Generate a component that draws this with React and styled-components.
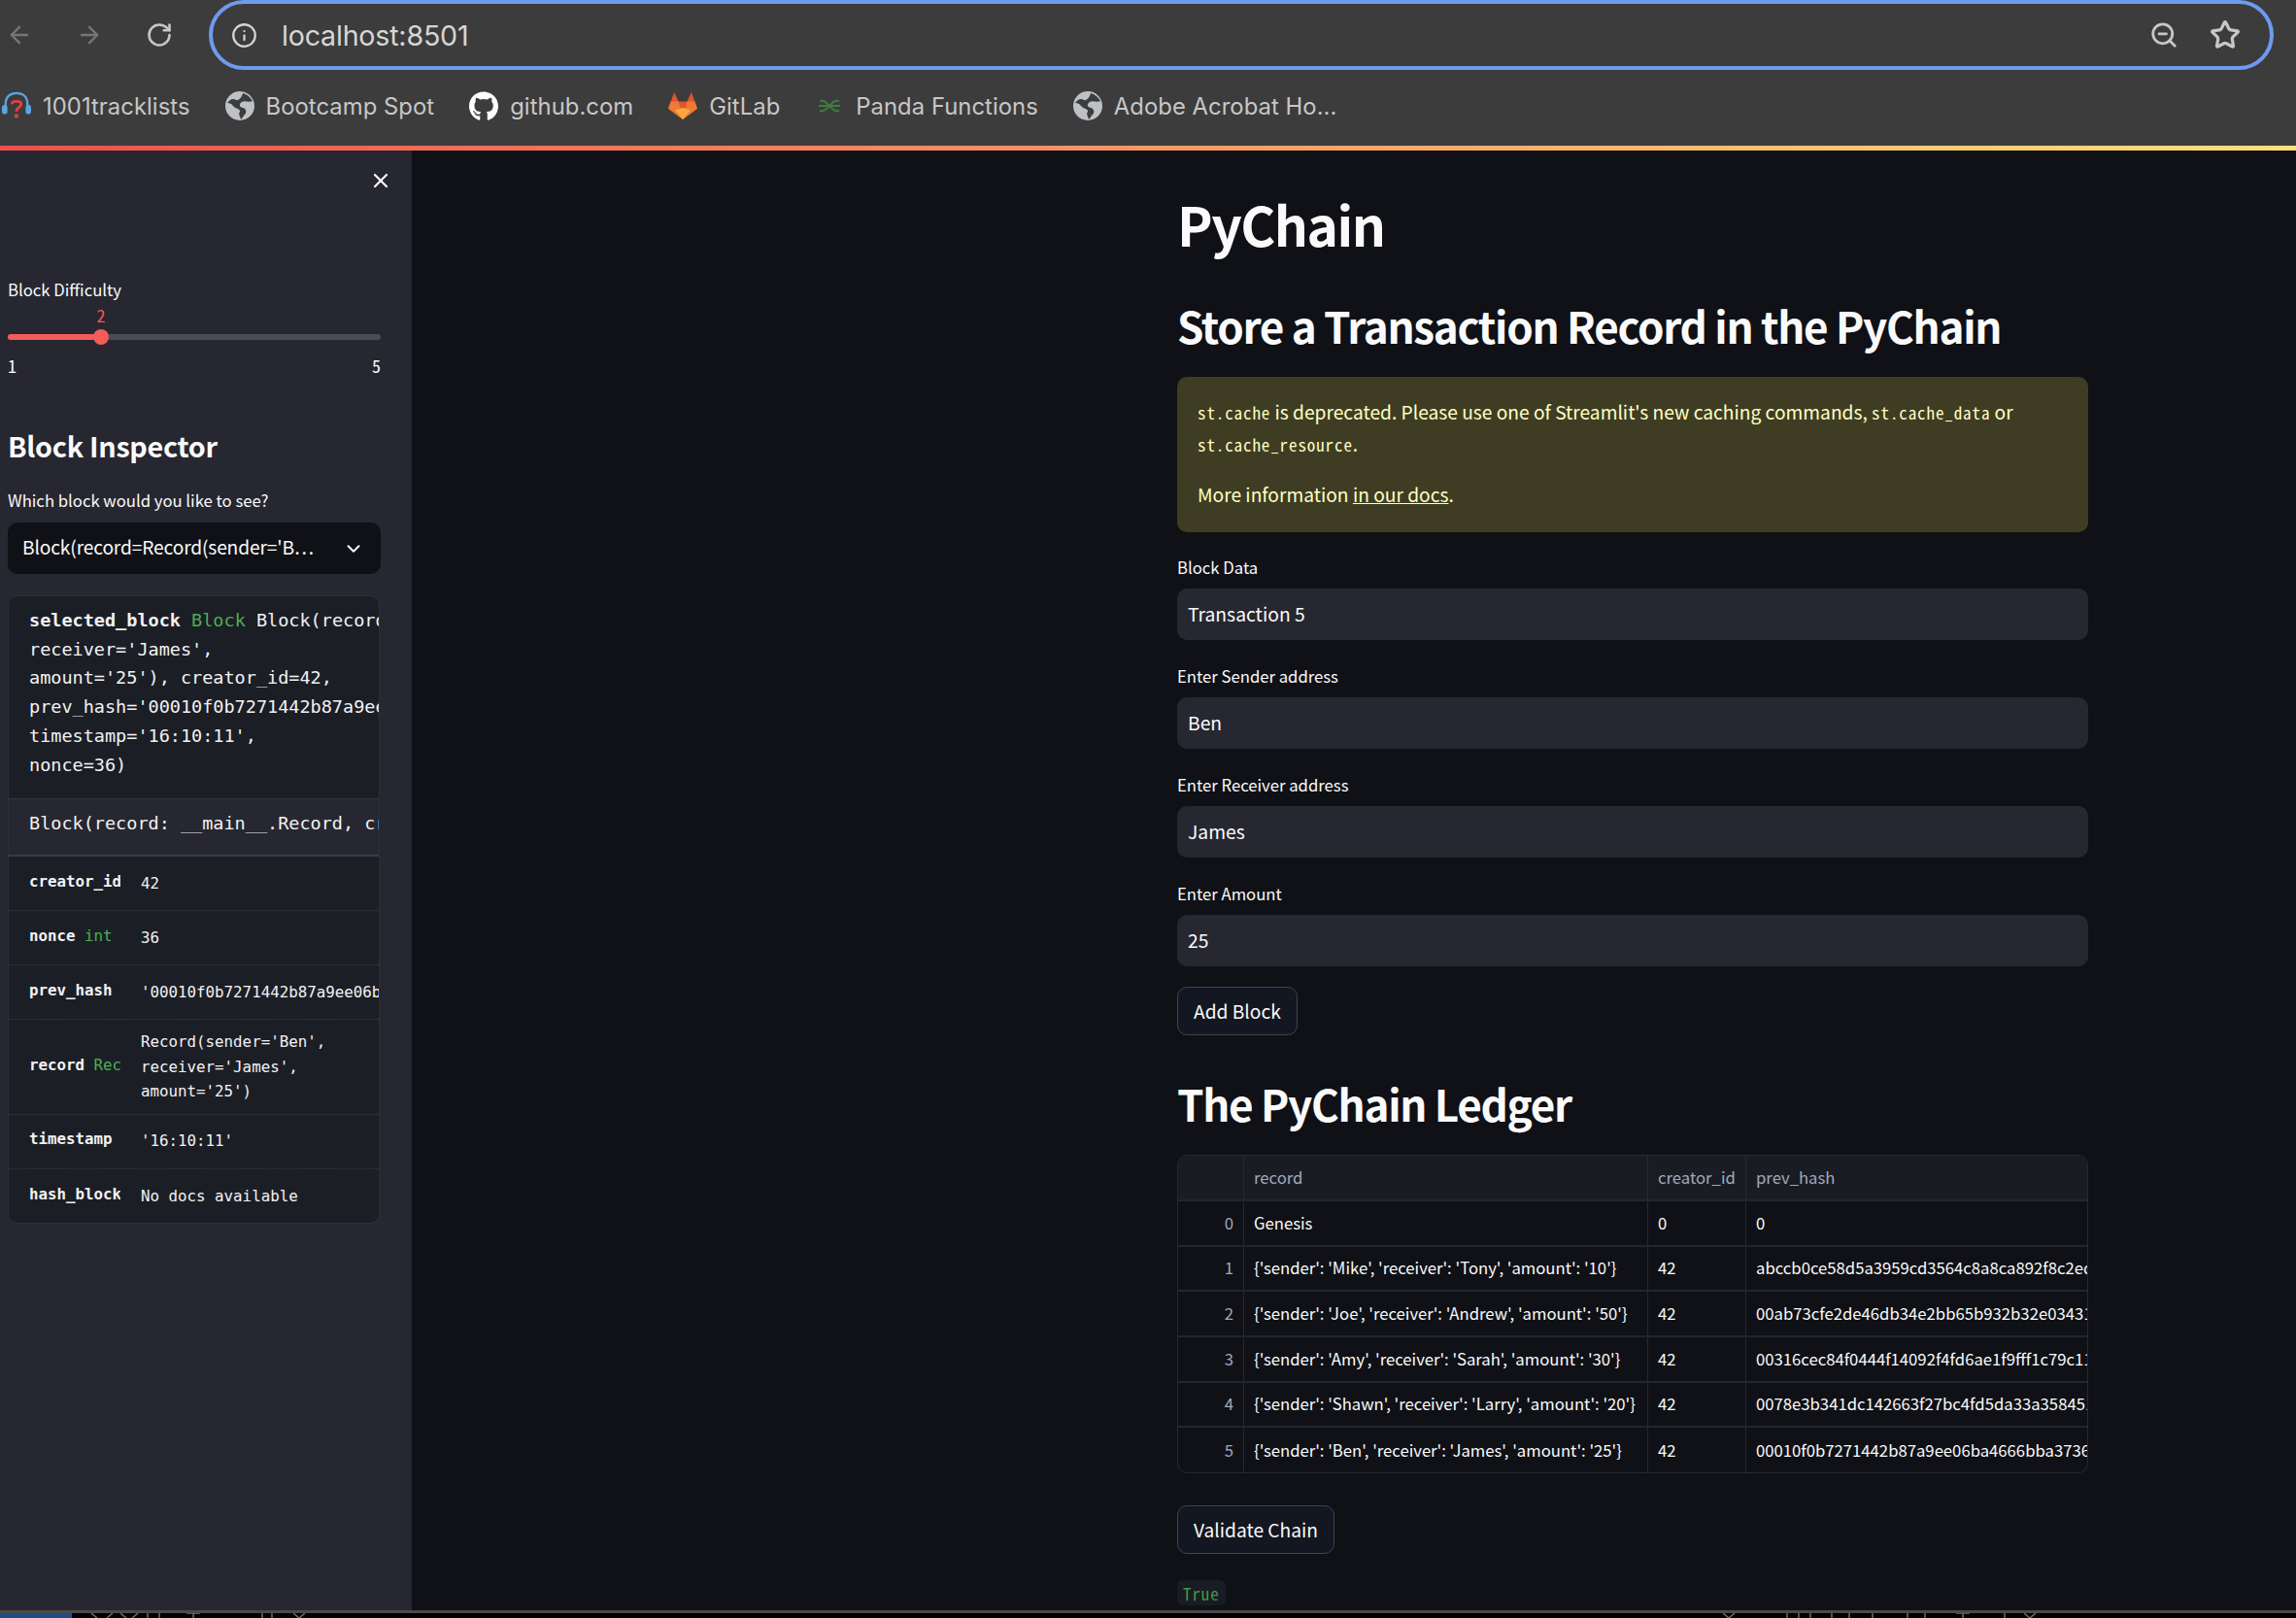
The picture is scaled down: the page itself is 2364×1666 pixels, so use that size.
import React from 'react'
import styled, { createGlobalStyle } from 'styled-components'
import { ArrowLeft, ArrowRight, RotateCw, Info, ZoomOut, Star, X, ChevronDown } from 'lucide-react'
import { FaGithub } from 'react-icons/fa'

const SANS = '"Noto Sans CJK SC", "Noto Sans", sans-serif'
const MONO = '"DejaVu Sans Mono", monospace'
const CODE = '"Noto Sans Mono CJK SC", "Liberation Mono", monospace'

const GlobalStyle = createGlobalStyle`
  html, body {
    margin: 0;
    padding: 0;
    background: #0f1116;
    overflow: hidden;
  }
  * { box-sizing: border-box; }
`

const Headphones = () => (
  <svg width="32" height="32" viewBox="0 0 32 32">
    <path d="M4 20 V14 C4 6 9 2 16 2 C23 2 28 6 28 14 V20" fill="none" stroke="#5aa5e0" strokeWidth="2.4" />
    <rect x="0" y="15" width="6" height="10" rx="3" fill="#5aa5e0" />
    <rect x="26" y="15" width="6" height="10" rx="3" fill="#5aa5e0" />
    <path d="M11 14 C11 10 21 10 21 14 C21 18 16 17 16 22" fill="none" stroke="#e2413f" strokeWidth="3" />
    <rect x="14" y="25" width="4" height="4" fill="#e2413f" />
  </svg>
)

const Globe = () => (
  <svg width="30" height="30" viewBox="0 0 30 30">
    <circle cx="15" cy="15" r="15" fill="#bdc1c6" />
    <path d="M18 2 C22 3 26 6 28 10 C24 12 20 9 17 11 C14 13 14 16 18 17 C22 18 22 22 20 24 C18 26 18 27 16 29 C15 25 13 23 15 21 C16 18 10 18 8 15 C6 12 3 12 2 12 C5 8 8 7 11 9 C14 10 17 6 18 2 Z" fill="#3c3c3c" />
  </svg>
)

const GitLab = () => (
  <svg width="34" height="32" viewBox="0 0 34 32">
    <polygon points="7,0 12,11 22,11 27,0 34,19 17,32 0,19" fill="#e0552f" />
    <polygon points="0,19 3,11 12,11 17,32" fill="#ee7a35" />
    <polygon points="34,19 31,11 22,11 17,32" fill="#ee7a35" />
    <polygon points="8,21 17,18 26,21 17,32" fill="#fba63c" />
  </svg>
)

const PandaMark = () => (
  <svg width="24" height="14" viewBox="0 0 24 14" fill="none" stroke="#3e7d3c" strokeWidth="2">
    <path d="M2 2 C7 1 9 4 12 7 C15 10 17 13 22 12" />
    <path d="M22 2 C17 1 15 4 12 7 C9 10 7 13 2 12" />
    <path d="M1 7 H23" />
  </svg>
)

const bookmarks = [
  { icon: <Headphones />, label: '1001tracklists' },
  { icon: <Globe />, label: 'Bootcamp Spot' },
  { icon: <FaGithub size={35} color="#fff" />, label: 'github.com' },
  { icon: <GitLab />, label: 'GitLab' },
  { icon: <PandaMark />, label: 'Panda Functions' },
  { icon: <Globe />, label: 'Adobe Acrobat Ho...' },
]

const inspectRows = [
  { key: 'creator_id', value: ['42'] },
  { key: 'nonce', type: 'int', value: ['36'] },
  { key: 'prev_hash', value: ["'00010f0b7271442b87a9ee06ba4666bba3736'"] },
  { key: 'record', type: 'Record', value: ["Record(sender='Ben',", "receiver='James',", "amount='25')"] },
  { key: 'timestamp', value: ["'16:10:11'"] },
  { key: 'hash_block', value: ['No docs available'] },
]

const fields = [
  { label: 'Block Data', value: 'Transaction 5' },
  { label: 'Enter Sender address', value: 'Ben' },
  { label: 'Enter Receiver address', value: 'James' },
  { label: 'Enter Amount', value: '25' },
]

const ledger = [
  ['Genesis', '0', '0'],
  ["{'sender': 'Mike', 'receiver': 'Tony', 'amount': '10'}", '42', 'abccb0ce58d5a3959cd3564c8a8ca892f8c2edf1a90b'],
  ["{'sender': 'Joe', 'receiver': 'Andrew', 'amount': '50'}", '42', '00ab73cfe2de46db34e2bb65b932b32e03431a90b7c2'],
  ["{'sender': 'Amy', 'receiver': 'Sarah', 'amount': '30'}", '42', '00316cec84f0444f14092f4fd6ae1f9fff1c79c11a90'],
  ["{'sender': 'Shawn', 'receiver': 'Larry', 'amount': '20'}", '42', '0078e3b341dc142663f27bc4fd5da33a358451a90b7c'],
  ["{'sender': 'Ben', 'receiver': 'James', 'amount': '25'}", '42', '00010f0b7271442b87a9ee06ba4666bba3736a90b7c2'],
]

const App = () => {
  return (
    <Page>
      <GlobalStyle />
      <Toolbar>
        <NavRow>
          <NavButton $dim><ArrowLeft size={30} strokeWidth={2} /></NavButton>
          <NavButton $dim><ArrowRight size={30} strokeWidth={2} /></NavButton>
          <NavButton><RotateCw size={28} strokeWidth={2.2} /></NavButton>
          <UrlBar>
            <Info size={27} strokeWidth={2} color="#d6d6d6" />
            <UrlText>localhost:8501</UrlText>
            <UrlActions>
              <ZoomOut size={30} strokeWidth={2.2} color="#c7c7c7" />
              <Star size={32} strokeWidth={2.4} color="#c7c7c7" />
            </UrlActions>
          </UrlBar>
        </NavRow>
        <BookmarkRow>
          {bookmarks.map((b) => (
            <Bookmark key={b.label}>
              <BookmarkIcon>{b.icon}</BookmarkIcon>
              {b.label}
            </Bookmark>
          ))}
        </BookmarkRow>
      </Toolbar>
      <Decoration />

      <Body>
        <Sidebar>
          <CloseButton><X size={24} strokeWidth={2.2} color="#fafafa" /></CloseButton>

          <SliderLabel>Block Difficulty</SliderLabel>
          <Slider>
            <SliderValue>2</SliderValue>
            <SliderTrack>
              <SliderFill />
              <SliderThumb />
            </SliderTrack>
          </Slider>
          <SliderTicks>
            <span>1</span>
            <span>5</span>
          </SliderTicks>

          <SideHeading>Block Inspector</SideHeading>
          <SelectLabel>Which block would you like to see?</SelectLabel>
          <Select>
            <SelectText>Block(record=Record(sender='B…</SelectText>
            <ChevronDown size={22} strokeWidth={2.2} color="#fafafa" />
          </Select>

          <InspectCard>
            <InspectHead>
              <div><b>selected_block</b> <TypeName>Block</TypeName> Block(record=Record(sender='Ben',</div>
              <div>receiver='James',</div>
              <div>amount='25'), creator_id=42,</div>
              <div>prev_hash='00010f0b7271442b87a9ee06ba4666bba3736',</div>
              <div>timestamp='16:10:11',</div>
              <div>nonce=36)</div>
            </InspectHead>
            <InspectDoc>Block(record: __main__.Record, creator_id: int)</InspectDoc>
            {inspectRows.map((row) => (
              <InspectRow key={row.key}>
                <InspectKey>
                  <b>{row.key}</b>{row.type && <TypeName> {row.type}</TypeName>}
                </InspectKey>
                <InspectValue>
                  {row.value.map((line) => <div key={line}>{line}</div>)}
                </InspectValue>
              </InspectRow>
            ))}
          </InspectCard>
        </Sidebar>

        <Main>
          <Title>PyChain</Title>
          <Heading $top={39}>Store a Transaction Record in the PyChain</Heading>

          <Warning>
            <p><code>st.cache</code> is deprecated. Please use one of Streamlit's new caching commands, <code>st.cache_data</code> or <code>st.cache_resource</code>.</p>
            <p>More information <a href="#docs">in our docs</a>.</p>
          </Warning>

          <Fields>
            {fields.map((f) => (
              <Field key={f.label}>
                <FieldLabel>{f.label}</FieldLabel>
                <Input>{f.value}</Input>
              </Field>
            ))}
          </Fields>

          <Button $top={21}>Add Block</Button>

          <Heading $top={40}>The PyChain Ledger</Heading>

          <Table>
            <HeadRow>
              <span />
              <span>record</span>
              <span>creator_id</span>
              <span>prev_hash</span>
            </HeadRow>
            {ledger.map((row, i) => (
              <TableRow key={row[2]}>
                <IndexCell>{i}</IndexCell>
                <span>{row[0]}</span>
                <span>{row[1]}</span>
                <span>{row[2]}</span>
              </TableRow>
            ))}
          </Table>

          <Button $top={33}>Validate Chain</Button>
          <Result>True</Result>
        </Main>
      </Body>

      <ScreenEdge>
        <DockTile />
        <svg width="2290" height="6" viewBox="0 0 2290 6" fill="none" stroke="#6d6d6d" strokeWidth="1.5">
          <path d="M20 0 L26 5 M36 5 L42 0 M50 0 L56 5 M62 5 L68 0 M78 0 V5 M90 0 V5 M118 0 H132 M125 0 V5 M196 0 V5 M206 0 V5 M228 0 L234 5 L240 0" />
          <path d="M1700 0 L1706 5 L1712 0 M1766 0 V5 M1778 0 V5 M1790 0 V5 M1812 0 V5 M1830 0 V5 M1854 0 V5 M1890 0 V5 M1908 0 V5 M1940 0 H1954 M1947 0 V5 M1990 0 V5 M2010 0 L2016 5 L2022 0" />
        </svg>
      </ScreenEdge>
    </Page>
  )
}

const Page = styled.div`
  width: 2364px;
  height: 1666px;
  display: flex;
  flex-direction: column;
  overflow: hidden;
  background: #0f1116;
  color: #fafafa;
  font-family: ${SANS};
`

const Toolbar = styled.header`
  height: 150px;
  flex: none;
  background: #3c3c3c;
  display: flex;
  flex-direction: column;
`

const NavRow = styled.div`
  height: 72px;
  display: flex;
  align-items: center;
  gap: 44px;
  padding: 0 23px 0 6px;
`

const NavButton = styled.div`
  width: 28px;
  display: flex;
  justify-content: center;
  color: ${(p) => (p.$dim ? '#777777' : '#c7c7c7')};
`

const UrlBar = styled.div`
  flex: 1;
  height: 72px;
  margin-left: -7px;
  display: flex;
  align-items: center;
  padding: 0 30px 0 19px;
  border: 4px solid #6e9bf0;
  border-radius: 36px;
`

const UrlText = styled.div`
  margin-left: 25px;
  font-family: Inter, sans-serif;
  font-size: 28.6px;
  letter-spacing: -0.2px;
  color: #d6d6d6;
`

const UrlActions = styled.div`
  margin-left: auto;
  display: flex;
  align-items: center;
  gap: 32px;
`

const BookmarkRow = styled.nav`
  flex: 1;
  display: flex;
  align-items: flex-start;
  gap: 36px;
  padding: 19px 0 0 2px;
`

const Bookmark = styled.div`
  display: flex;
  align-items: center;
  height: 36px;
  gap: 12px;
  font-family: Inter, sans-serif;
  font-size: 23.8px;
  letter-spacing: 0.06px;
  color: #c7c7c7;
`

const BookmarkIcon = styled.span`
  width: 30px;
  height: 36px;
  display: flex;
  align-items: center;
  justify-content: center;
`

const Decoration = styled.div`
  height: 5px;
  flex: none;
  background: linear-gradient(90deg, #ef4f4f, #ffe07a);
`

const Body = styled.div`
  flex: 1;
  min-height: 0;
  display: flex;
`

const Sidebar = styled.aside`
  width: 424px;
  flex: none;
  background: #262730;
  padding: 20px 32px 0 8px;
  display: flex;
  flex-direction: column;
`

const CloseButton = styled.div`
  align-self: flex-end;
  height: 22px;
  margin-right: -12px;
  display: flex;
  align-items: center;
`

const SliderLabel = styled.div`
  margin-top: 89px;
  font-size: 16.7px;
  line-height: 24px;
`

const Slider = styled.div`
  position: relative;
  height: 56px;
  padding-top: 34px;
`

const SliderValue = styled.span`
  position: absolute;
  left: 88px;
  top: 2px;
  width: 16px;
  text-align: center;
  font-family: ${CODE};
  font-size: 18px;
  line-height: 24px;
  color: #f0595a;
`

const SliderTrack = styled.div`
  position: relative;
  height: 6px;
  border-radius: 3px;
  background: #4a4b57;
`

const SliderFill = styled.div`
  width: 96px;
  height: 100%;
  border-radius: 3px 0 0 3px;
  background: #f25c5a;
`

const SliderThumb = styled.div`
  position: absolute;
  left: 88px;
  top: -5px;
  width: 16px;
  height: 16px;
  border-radius: 50%;
  background: #f25c5a;
`

const SliderTicks = styled.div`
  display: flex;
  justify-content: space-between;
  font-family: ${CODE};
  font-size: 18px;
  line-height: 20px;
`

const SideHeading = styled.h3`
  margin: 51px 0 0;
  font-size: 28.8px;
  font-weight: 700;
  letter-spacing: -0.3px;
  line-height: 44px;
`

const SelectLabel = styled.div`
  margin-top: 22px;
  font-size: 16.7px;
  line-height: 24px;
`

const Select = styled.div`
  margin-top: 11px;
  height: 53px;
  flex: none;
  background: #0f1116;
  border-radius: 10px;
  display: flex;
  align-items: center;
  justify-content: space-between;
  padding: 0 17px 0 15px;
`

const SelectText = styled.span`
  font-size: 19.2px;
  letter-spacing: -0.15px;
  line-height: 50px;
  height: 53px;
  white-space: nowrap;
`

const InspectCard = styled.section`
  margin-top: 22px;
  width: 383px;
  height: 647px;
  flex: none;
  background: #1c1e26;
  border: 1px solid #2e3038;
  border-radius: 10px;
  overflow: hidden;
  font-family: ${MONO};
  color: #f2f2f2;
`

const TypeName = styled.span`
  color: #4caf50;
`

const InspectHead = styled.div`
  height: 208px;
  padding: 10px 0 0 21px;
  font-size: 18.5px;
  line-height: 29.7px;
  white-space: nowrap;
`

const InspectDoc = styled.div`
  height: 60px;
  padding: 10px 0 0 21px;
  background: #262730;
  border-top: 1px solid #33353d;
  border-bottom: 2px solid #3a3c45;
  font-size: 18.5px;
  line-height: 30px;
  white-space: nowrap;
`

const InspectRow = styled.div`
  display: grid;
  grid-template-columns: 94px 1fr;
  column-gap: 21px;
  align-items: center;
  min-height: 56px;
  padding: 10px 0 10px 21px;
  border-bottom: 1px dotted #3a3c45;
  font-size: 15.8px;
  line-height: 25.5px;
  &:last-child { border-bottom: 0; }
`

const InspectKey = styled.div`
  overflow: hidden;
  white-space: nowrap;
  transform: translateY(-2px);
`

const InspectValue = styled.div`
  white-space: nowrap;
`

const Main = styled.main`
  flex: 1;
  padding: 39px 214px 0 788px;
  display: flex;
  flex-direction: column;
  min-width: 0;
`

const Title = styled.h1`
  margin: 0;
  font-size: 55px;
  font-weight: 700;
  letter-spacing: -1.5px;
  line-height: 72px;
`

const Heading = styled.h2`
  margin: ${(p) => p.$top}px 0 0;
  font-size: 44px;
  font-weight: 700;
  letter-spacing: -1.3px;
  line-height: 60px;
  white-space: nowrap;
`

const Warning = styled.div`
  margin-top: 23px;
  height: 160px;
  flex: none;
  padding: 20px 21px 0;
  background: #3e3d24;
  border-radius: 10px;
  color: #ffffc2;
  font-size: 19.2px;
  line-height: 33px;

  p { margin: 0 0 19px; }
  code {
    font-family: ${CODE};
    font-size: 17px;
    letter-spacing: 0.9px;
    line-height: 1;
  }
  a {
    color: inherit;
    text-decoration: underline;
  }
`

const Fields = styled.div`
  margin-top: 24px;
  display: flex;
  flex-direction: column;
  gap: 25px;
`

const Field = styled.div`
  display: flex;
  flex-direction: column;
  gap: 10px;
`

const FieldLabel = styled.div`
  font-size: 16.7px;
  line-height: 24px;
`

const Input = styled.div`
  height: 53px;
  padding: 0 11px 2px;
  display: flex;
  align-items: center;
  background: #262730;
  border-radius: 10px;
  font-size: 19.3px;
`

const Button = styled.button`
  align-self: flex-start;
  margin-top: ${(p) => p.$top}px;
  height: 50px;
  padding: 0 16px;
  background: #131721;
  color: #fafafa;
  border: 1px solid #41434e;
  border-radius: 10px;
  font-family: inherit;
  font-size: 19.2px;
`

const Table = styled.div`
  margin-top: 23px;
  height: 328px;
  flex: none;
  border: 1px solid #262932;
  border-radius: 10px;
  overflow: hidden;
  font-size: 16.7px;
`

const TableRow = styled.div`
  display: grid;
  grid-template-columns: 67px 416px 101px 1fr;
  height: 46.67px;
  align-items: stretch;
  border-bottom: 2px solid #23262e;
  &:last-child { border-bottom: 0; }

  & > span {
    display: flex;
    align-items: center;
    padding: 0 10px 1px;
    border-left: 1px solid #262932;
    white-space: nowrap;
    overflow: hidden;
  }
  & > span:first-child { border-left: 0; }
`

const HeadRow = styled(TableRow)`
  height: 47px;
  background: #1a1c24;
  color: #a3a8b8;
`

const IndexCell = styled.span`
  justify-content: flex-end;
  color: #a3a8b8;
`

const Result = styled.code`
  align-self: flex-start;
  margin-top: 27px;
  height: 26px;
  padding: 0 6px;
  display: flex;
  align-items: center;
  background: #1a1c24;
  border-radius: 6px;
  color: #3f9c44;
  font-family: ${CODE};
  font-size: 17px;
  letter-spacing: 0.9px;
`

const ScreenEdge = styled.footer`
  height: 8px;
  flex: none;
  background: #000;
  border-top: 3px solid #4a4a4a;
  display: flex;
  overflow: hidden;
`

const DockTile = styled.div`
  width: 74px;
  background: #1f4c86;
`

export default App
